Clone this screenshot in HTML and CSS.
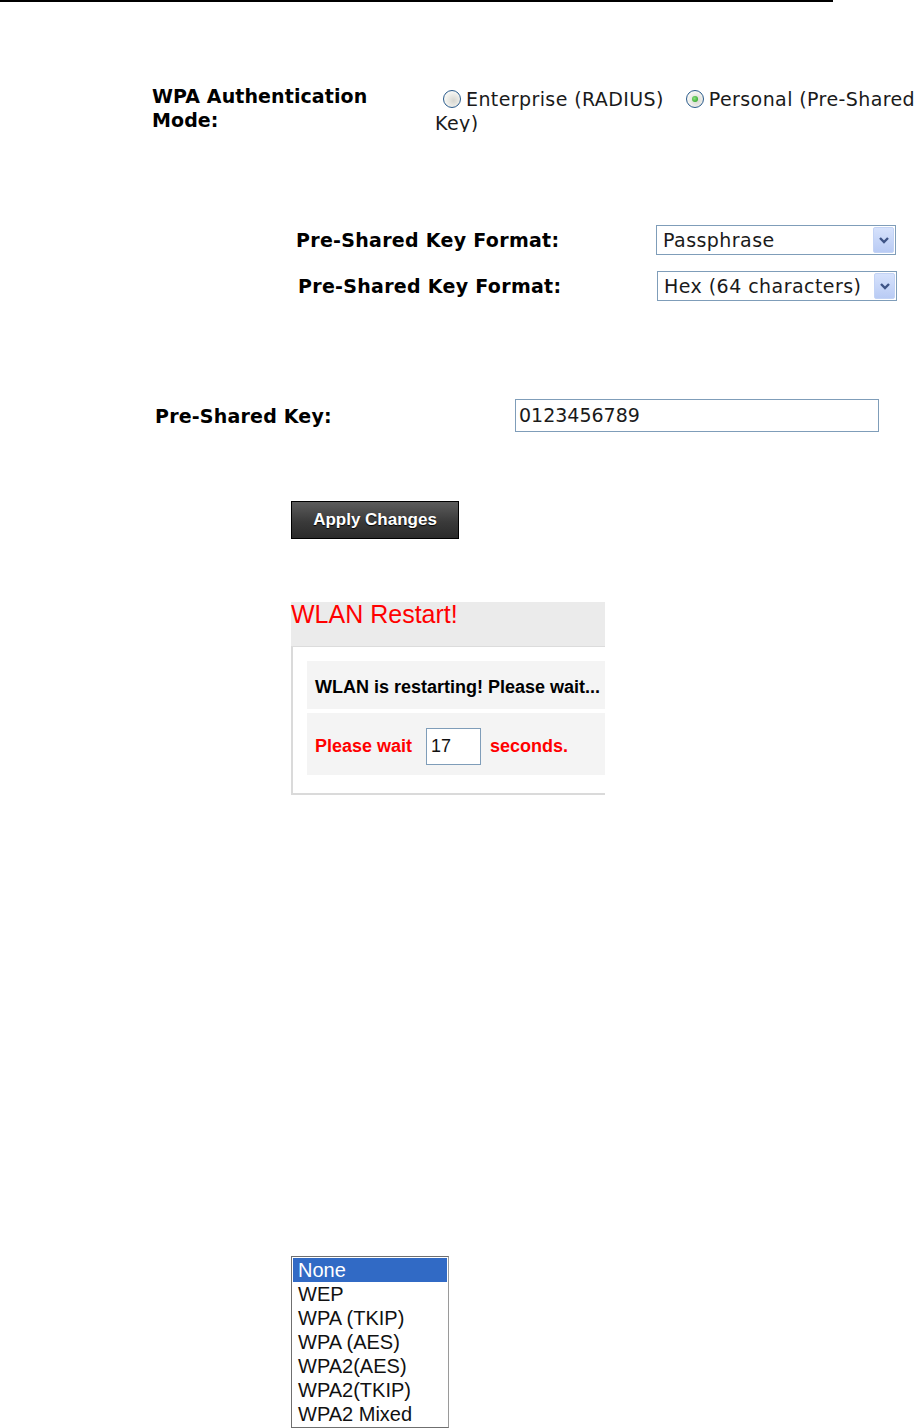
FILE: index.html
```html
<!DOCTYPE html>
<html lang="en">
<head>
    <meta charset="UTF-8">
    <title>Wireless Security Settings</title>
    <link rel="stylesheet" href="styles.css">
</head>
<body>
    <div class="rule"></div>

    <div class="auth-row">
        <div class="auth-label">WPA Authentication<br>Mode:</div>
        <div class="auth-options">
            <span class="radio"></span>Enterprise (RADIUS)<span class="radio checked"></span>Personal (Pre-Shared<br>Key)
        </div>
    </div>

    <div class="format-block">
        <div class="format-row">
            <span class="field-label">Pre-Shared Key Format:</span>
            <div class="select">
                <span class="select-text">Passphrase</span>
                <span class="arrow"><svg width="14" height="10" viewBox="0 0 14 10"><path d="M3 3 L7 7 L11 3" fill="none" stroke="#3e5486" stroke-width="2.4"/></svg></span>
            </div>
        </div>
        <div class="format-row shift">
            <span class="field-label">Pre-Shared Key Format:</span>
            <div class="select">
                <span class="select-text">Hex (64 characters)</span>
                <span class="arrow"><svg width="14" height="10" viewBox="0 0 14 10"><path d="M3 3 L7 7 L11 3" fill="none" stroke="#3e5486" stroke-width="2.4"/></svg></span>
            </div>
        </div>
    </div>

    <div class="key-row">
        <span class="key-label">Pre-Shared Key:</span>
        <div class="text-input">0123456789</div>
    </div>

    <div class="apply-btn">Apply Changes</div>

    <div class="restart-panel">
        <div class="restart-head">WLAN Restart!</div>
        <div class="restart-body">
            <div class="restart-row">WLAN is restarting! Please wait...</div>
            <div class="restart-row wait">
                <span>Please wait</span>
                <div class="count-box">17</div>
                <span>seconds.</span>
            </div>
        </div>
    </div>

    <ul class="listbox">
        <li class="selected">None</li>
        <li>WEP</li>
        <li>WPA (TKIP)</li>
        <li>WPA (AES)</li>
        <li>WPA2(AES)</li>
        <li>WPA2(TKIP)</li>
        <li>WPA2 Mixed</li>
    </ul>
</body>
</html>
```

FILE: styles.css
```css
* {
    margin: 0;
    padding: 0;
    box-sizing: border-box;
}

body {
    background: white;
    color: black;
    font-family: 'DejaVu Sans', sans-serif;
    width: 924px;
    height: 1428px;
    overflow: hidden;
}

.rule {
    width: 833px;
    height: 2px;
    background: black;
}

/* authentication mode */
.auth-row {
    display: flex;
    margin-top: 82px;
    padding-left: 152px;
    height: 47px;
}

.auth-label {
    width: 283px;
    font-size: 19px;
    font-weight: bold;
    line-height: 24px;
    letter-spacing: 0.1px;
}

.auth-options {
    flex: 1;
    min-width: 0;
    margin-top: 3px;
    height: 45px;
    overflow: hidden;
    white-space: nowrap;
    font-size: 19px;
    line-height: 24px;
    letter-spacing: 0.4px;
    color: #1a1a1a;
}

.radio {
    display: inline-block;
    width: 18px;
    height: 18px;
    margin: 0 5px 0 8px;
    vertical-align: -2px;
    border: 1px solid #2a5b8c;
    border-radius: 50%;
    background: radial-gradient(circle at 60% 60%, #d6d6d0 0%, #f4f4f0 60%, #ffffff 100%);
    position: relative;
}

.radio.checked {
    margin-left: 22px;
}

.radio.checked::after {
    content: "";
    position: absolute;
    left: 5px;
    top: 5px;
    width: 6px;
    height: 6px;
    border-radius: 50%;
    background: radial-gradient(circle at 40% 40%, #8be07f, #1f9a18);
}

/* key format selects */
.format-block {
    margin-top: 94px;
    padding-left: 296px;
    display: flex;
    flex-direction: column;
    gap: 16px;
}

.format-row {
    display: flex;
    align-items: center;
    height: 30px;
}

.format-row.shift {
    margin-left: 2px;
}

.field-label {
    width: 360px;
    font-size: 19px;
    font-weight: bold;
    letter-spacing: 0.3px;
}

.format-row.shift .field-label {
    width: 359px;
}

.select {
    width: 240px;
    height: 30px;
    border: 1px solid #7f9db9;
    background: white;
    display: flex;
    align-items: center;
    justify-content: space-between;
    padding: 1px 1px 1px 6px;
    font-size: 19px;
    letter-spacing: 0.45px;
    color: #1a1a1a;
}

.arrow {
    width: 21px;
    height: 26px;
    display: flex;
    align-items: center;
    justify-content: center;
    background: linear-gradient(#d6e2fc, #b9cbf4);
    border: 1px solid #c3d3f5;
    border-radius: 2px;
}

/* key input */
.key-row {
    display: flex;
    align-items: center;
    margin-top: 98px;
    padding-left: 155px;
}

.key-label {
    width: 360px;
    font-size: 19px;
    font-weight: bold;
    letter-spacing: 0.2px;
}

.text-input {
    width: 364px;
    height: 33px;
    border: 1px solid #7f9db9;
    padding-left: 3px;
    font-size: 19px;
    line-height: 31px;
    color: #1a1a1a;
}

/* apply button */
.apply-btn {
    margin: 69px 0 0 291px;
    width: 168px;
    height: 38px;
    border: 1px solid #000;
    background: linear-gradient(#5c5c5c, #3a3a3a 55%, #2a2a2a);
    color: white;
    font-family: 'Liberation Sans', Arial, sans-serif;
    font-size: 17px;
    font-weight: bold;
    text-align: center;
    line-height: 36px;
    text-shadow: 0 1px 1px #000;
}

/* restart panel */
.restart-panel {
    margin: 63px 0 0 291px;
    width: 314px;
    height: 193px;
    font-family: 'Liberation Sans', Arial, sans-serif;
}

.restart-head {
    height: 45px;
    background: #ebebeb;
    color: #ff0000;
    font-size: 25px;
    line-height: 24px;
    border-bottom: 1px solid #dcdcdc;
}

.restart-body {
    height: 148px;
    border-left: 2px solid #dadada;
    border-bottom: 2px solid #dadada;
    padding: 14px 0 0 14px;
    display: flex;
    flex-direction: column;
    gap: 4px;
}

.restart-row {
    height: 48px;
    padding-top: 4px;
    background: #f4f4f4;
    padding-left: 8px;
    display: flex;
    align-items: center;
    font-size: 18px;
    font-weight: bold;
}

.restart-row.wait {
    height: 62px;
    color: #ff0000;
}

.count-box {
    width: 55px;
    height: 37px;
    margin: 0 9px 0 14px;
    border: 1px solid #7f9db9;
    background: white;
    color: #111;
    font-weight: normal;
    padding-left: 4px;
    line-height: 35px;
}

/* encryption list */
.listbox {
    list-style: none;
    margin: 461px 0 0 291px;
    width: 158px;
    border: 1px solid #6f6f6f;
    border-right-color: #9a9a9a;
    padding: 1px;
    font-family: 'Liberation Sans', Arial, sans-serif;
    font-size: 20px;
}

.listbox li {
    height: 24px;
    line-height: 24px;
    padding-left: 5px;
    color: #111;
}

.listbox li.selected {
    background: #316ac5;
    color: white;
}
```
